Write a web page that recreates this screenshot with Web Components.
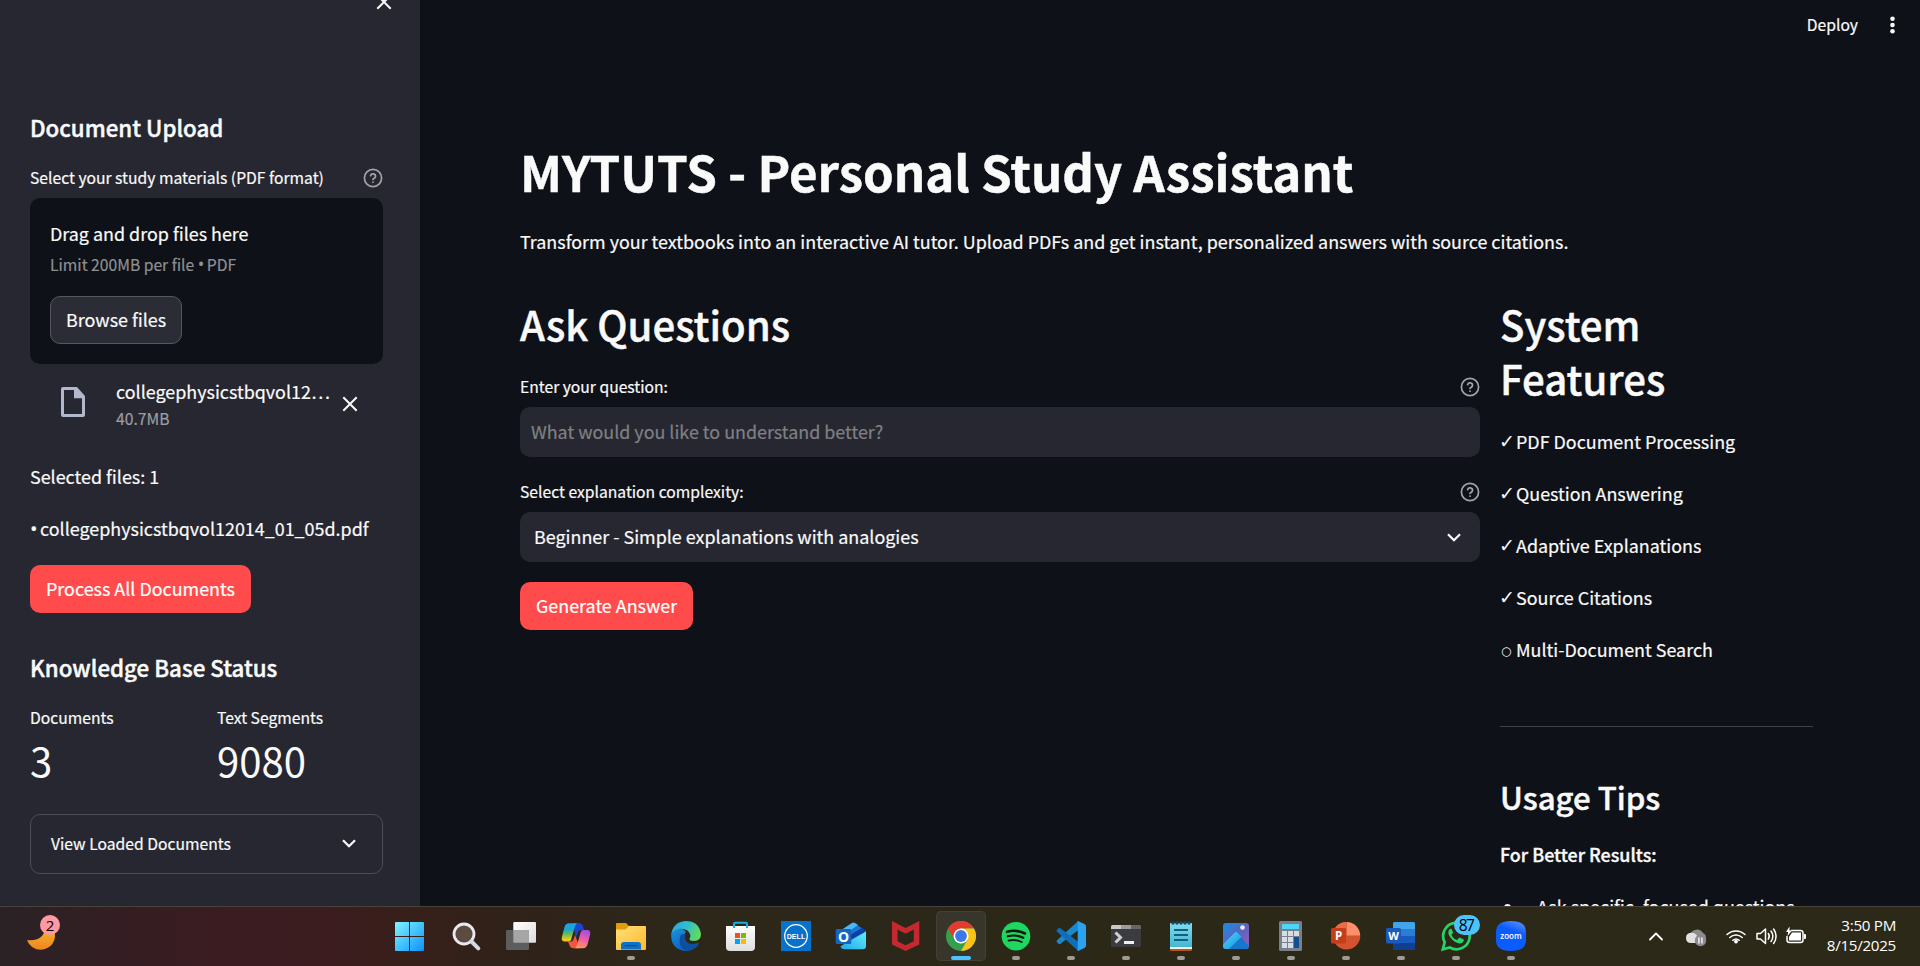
<!DOCTYPE html>
<html lang="en">
<head>
<meta charset="utf-8">
<title>MYTUTS - Personal Study Assistant</title>
<style>
html,body{margin:0;height:100%;overflow:hidden;background:#0e1117}
body{font-family:"Noto Sans CJK SC",sans-serif;color:#fafafa;-webkit-text-stroke:.2px}
</style>
</head>
<body>
<app-window></app-window>
<script>
const define=(name,html)=>customElements.define(name,class extends HTMLElement{
  constructor(){super();this.attachShadow({mode:'open'})}
  connectedCallback(){
    const t=document.createElement('template');
    t.innerHTML=typeof html==='function'?html(this):html;
    this.shadowRoot.replaceChildren(t.content.cloneNode(true));
  }
});

/* Headings and text */
define('app-heading',`<style>
:host{display:block;font-weight:500;-webkit-text-stroke:.45px}
:host([level="1"]){font-size:49.2px;line-height:66px;font-weight:700;white-space:nowrap}
:host([level="2"]){font-size:40.15px;line-height:54px}
:host([level="3"]){font-size:31.2px;line-height:42px}
:host([level="4"]){font-size:22.3px;line-height:30px}
</style><slot></slot>`);
define('app-text',`<style>:host{display:block;font-size:17.92px;line-height:32px;white-space:nowrap}:host([strong]){font-weight:500;-webkit-text-stroke:.35px}</style><slot></slot>`);
define('bullet-mark',`<style>:host{display:inline-block;width:10px;font-family:"Open Sans",sans-serif;font-size:1.12em;line-height:1;letter-spacing:-2px}</style>•`);
define('help-icon',`<style>:host{display:block;width:20px;height:20px}svg{display:block}</style>
<svg width="20" height="20" viewBox="0 0 20 20" fill="none" stroke="#a3a4a8" stroke-width="1.7" stroke-linecap="round" stroke-linejoin="round"><circle cx="10" cy="10" r="8.6"/><path d="M7.6 7.7a2.5 2.5 0 0 1 4.9.8c0 1.7-2.5 2.1-2.5 3"/><path d="M10 14.1v.1"/></svg>`);
define('field-label',`<style>:host{display:flex;justify-content:space-between;align-items:center;height:28px;font-size:15.68px;line-height:28px;white-space:nowrap}</style><span><slot></slot></span><help-icon></help-icon>`);
define('app-button',`<style>
:host{display:flex;align-items:center;width:max-content;box-sizing:border-box;height:48px;padding:0 16px 2px;border-radius:10px;background:#ff4b4b;color:#fff;font-size:17.92px;line-height:32px;white-space:nowrap}
:host([secondary]){background:#2b2c36;border:1px solid #55565e;padding:0 15px 2px;color:#fafafa}
</style><slot></slot>`);
define('close-icon',`<style>:host{display:block;width:16px;height:16px}svg{display:block}</style><svg width="16" height="16" viewBox="0 0 16 16" stroke="#fafafa" stroke-width="2" stroke-linecap="butt"><path d="M1.3 1.3 14.7 14.7M14.7 1.3 1.3 14.7"/></svg>`);
define('chevron-icon',`<style>:host{display:block;width:14px;height:9px}svg{display:block}</style><svg width="14" height="9" viewBox="0 0 14 9" fill="none" stroke="#fafafa" stroke-width="2.3"><path d="M1 1.3 7 7.2 13 1.3"/></svg>`);

/* Sidebar */
define('file-dropzone',`<style>
:host{display:block;box-sizing:border-box;height:166px;padding:19px 20px 20px;border-radius:10px;background:#0e1117}
.t{font-size:17.92px;line-height:32px;white-space:nowrap}
.l{font-size:15.68px;line-height:28px;color:#8f9094;white-space:nowrap;margin:2px 0 17px}
</style><div class="t">Drag and drop files here</div><div class="l">Limit 200MB per file <bullet-mark style="width:9px"></bullet-mark>PDF</div><app-button secondary>Browse files</app-button>`);
define('file-item',e=>`<style>
:host{display:grid;grid-template-columns:24px 218px 16px;padding:12px 0 0 31px;height:64px;box-sizing:border-box}
svg{display:block;margin-top:11px}
.n{margin-left:31px;margin-right:-27px;width:217px;padding-top:1px}
.a{font-size:17.92px;line-height:28px;white-space:nowrap}
.b{font-size:15.68px;line-height:26px;color:#9c9da1;margin-top:1px}
close-icon{margin:20px 0 0 39px}
</style><svg width="24" height="30" viewBox="0 0 24 30"><path fill="#b1b8cb" fill-rule="evenodd" d="M2 0h14l8 9v19a2 2 0 0 1-2 2H2a2 2 0 0 1-2-2V2a2 2 0 0 1 2-2zm1 3v24h18V11.3h-8V3z"/></svg>
<div class="n"><div class="a"><slot></slot></div><div class="b">${e.getAttribute('size')}</div></div><close-icon></close-icon>`);
define('metric-card',e=>`<style>
:host{display:block}.l{font-size:15.68px;line-height:28px;white-space:nowrap}.v{font-size:40.1px;line-height:56px;-webkit-text-stroke:0}
</style><div class="l">${e.getAttribute('label')}</div><div class="v"><slot></slot></div>`);
define('app-expander',`<style>
:host{display:flex;align-items:center;justify-content:space-between;box-sizing:border-box;height:60px;padding:0 26px 0 20px;border:1px solid #4b4c55;border-radius:10px;font-size:15.68px;line-height:28px}
chevron-icon{margin-bottom:2px}
</style><span><slot></slot></span><chevron-icon></chevron-icon>`);
define('side-bar',`<style>
:host{display:block;box-sizing:border-box;width:420px;height:906px;padding:0 37px 0 30px;background:#262730;overflow:hidden}
.top{display:flex;justify-content:flex-end;height:113px;margin-top:-6px}
.top close-icon{margin-right:-8.500px}
.m{display:grid;grid-template-columns:187px 1fr;margin:22px 0 26px}
</style>
<div class="top"><close-icon></close-icon></div>
<app-heading level="4" style="padding:5px 0 0">Document Upload</app-heading>
<field-label style="margin:22px 0 6px">Select your study materials (PDF format)</field-label>
<file-dropzone></file-dropzone>
<file-item size="40.7MB">collegephysicstbqvol12…</file-item>
<app-text style="margin-top:32px">Selected files: 1</app-text>
<app-text style="margin-top:20px"><bullet-mark></bullet-mark>collegephysicstbqvol12014_01_05d.pdf</app-text>
<app-button style="margin-top:21px">Process All Documents</app-button>
<app-heading level="4" style="margin-top:39px">Knowledge Base Status</app-heading>
<div class="m"><metric-card label="Documents">3</metric-card><metric-card label="Text Segments">9080</metric-card></div>
<app-expander>View Loaded Documents</app-expander>`);

/* Main area */
define('text-field',`<style>:host{display:flex;align-items:center;height:50px;box-sizing:border-box;padding:0 11px 2px;border-radius:10px;background:#262730;color:#7f8084;font-size:17.92px;line-height:32px}</style><slot></slot>`);
define('select-field',`<style>:host{display:flex;align-items:center;justify-content:space-between;height:50px;box-sizing:border-box;padding:0 19px 2px 14px;border-radius:10px;background:#262730;font-size:17.92px;line-height:32px}chevron-icon{margin-top:2px}</style><span><slot></slot></span><chevron-icon></chevron-icon>`);
define('feature-item',e=>`<style>:host{display:flex;height:32px;margin-bottom:20px;font-size:17.92px;line-height:32px;white-space:nowrap}
i{font:normal 19px/32px "DejaVu Sans",sans-serif;width:17px;margin-left:-1px;flex:none;-webkit-text-stroke:0}
i.o{font-size:12px;line-height:36px;width:15px;margin-left:1px}</style><i class="${e.getAttribute('mark')==='○'?'o':''}">${e.getAttribute('mark')}</i><slot></slot>`);
define('tip-item',`<style>:host{display:flex;height:32px;font-size:17.92px;line-height:32px;white-space:nowrap}
i{width:7px;height:7px;border-radius:50%;background:#fafafa;margin:14px 26px 0 4px;flex:none}</style><i></i><slot></slot>`);
define('top-bar',`<style>:host{display:flex;justify-content:flex-end;align-items:center;height:50px;padding-right:22px;font-size:15.68px;line-height:28px}
svg{display:block;margin-left:28px}</style><span>Deploy</span><svg width="12" height="20" viewBox="0 0 12 20" fill="#fafafa"><circle cx="6.5" cy="3.7" r="2.3"/><circle cx="6.5" cy="10" r="2.3"/><circle cx="6.5" cy="16.2" r="2.3"/></svg>`);
define('main-area',`<style>
:host{display:block;height:906px;overflow:hidden;background:#0e1117}
.c{padding:0 0 0 100px}
.g{display:grid;grid-template-columns:960px 313px;column-gap:20px;margin-top:40px}
hr{border:0;height:1px;background:#3d3f44;margin:61px 0 49px}
</style><top-bar></top-bar><div class="c">
<app-heading level="1" style="margin-top:88px">MYTUTS - Personal Study Assistant</app-heading>
<app-text style="margin-top:21px">Transform your textbooks into an interactive AI tutor. Upload PDFs and get instant, personalized answers with source citations.</app-text>
<div class="g"><section>
<app-heading level="2">Ask Questions</app-heading>
<field-label style="margin:22px 0 6px">Enter your question:</field-label>
<text-field>What would you like to understand better?</text-field>
<field-label style="margin:21px 0 6px">Select explanation complexity:</field-label>
<select-field>Beginner - Simple explanations with analogies</select-field>
<app-button style="margin-top:20px">Generate Answer</app-button>
</section><section>
<app-heading level="2" style="margin-bottom:20px">System Features</app-heading>
<feature-item mark="✓">PDF Document Processing</feature-item>
<feature-item mark="✓">Question Answering</feature-item>
<feature-item mark="✓">Adaptive Explanations</feature-item>
<feature-item mark="✓">Source Citations</feature-item>
<feature-item mark="○">Multi-Document Search</feature-item>
<hr>
<app-heading level="3">Usage Tips</app-heading>
<app-text strong style="margin:20px 0 20px">For Better Results:</app-text>
<tip-item>Ask specific, focused questions</tip-item>
</section></div></div>`);

/* Taskbar */
const ICONS={
start:`<defs><linearGradient id="a" x1="0" y1="0" x2="1" y2="1"><stop stop-color="#80f4ff"/><stop offset="1" stop-color="#0c92fb"/></linearGradient></defs><path fill="url(#a)" d="M0 1h13v14H-1V2q0-1 1-1zM14 1h13q1 0 1 1v13H14zM-1 16h14v14H0q-1 0-1-1zM14 16h14v13q0 1-1 1H14z"/>`,
search:`<circle cx="13" cy="13" r="10" fill="#5b4b40" stroke="#e9e9ee" stroke-width="2.8"/><path d="M20.5 20.5 27.3 27.3" stroke="#d5d9e2" stroke-width="4" stroke-linecap="round"/>`,
task:`<defs><linearGradient id="a" x1="0" y1="0" x2="1" y2="1"><stop stop-color="#fff"/><stop offset="1" stop-color="#dcdcdc"/></linearGradient></defs><rect x="7.3" y="1" width="22.7" height="20.7" rx="1" fill="url(#a)"/><rect x="0" y="9" width="23" height="20" rx="1" fill="#5d5d5d"/><path d="M7.3 9H22q1 0 1 1v11.700H8.300q-1 0-1-1z" fill="#a6a6a6"/>`,
copilot:`<defs><linearGradient id="a" x1="0" y1="0" x2="0" y2="1"><stop stop-color="#1f9fee"/><stop offset=".35" stop-color="#18a9c8"/><stop offset=".62" stop-color="#6cc04a"/><stop offset=".9" stop-color="#f6c915"/></linearGradient><linearGradient id="b" x1=".6" y1="0" x2=".3" y2="1"><stop stop-color="#a94be0"/><stop offset=".5" stop-color="#ee5fa5"/><stop offset="1" stop-color="#ff9a5a"/></linearGradient></defs>
<path fill="#1b45cf" d="M12 2.300h7q2 0 2.800 2.500l1.300 4.500h-3.500q-2 0-2.700 2l-2 6z"/><path fill="#f5563c" d="M7 20.500l2 5q.8 1.800 3 1.800h7L14 14l-1.800 5q-.5 1.500-2 1.500z"/>
<path fill="url(#a)" d="M8 2.300h9q-2 0-3 3L10.200 18.500q-.7 2-2.700 2H4q-4.300 0-3-5L3.500 6Q4.600 2.300 8 2.300z"/>
<path fill="url(#b)" d="M22 27.300H13q2 0 3-3l3.800-13.200q.7-2 2.700-2H26q4.300 0 3 5l-2.500 9.500q-1 3.700-4.500 3.700z"/>`,
folder:`<defs><linearGradient id="a" x1="0" y1="0" x2="1" y2="1"><stop stop-color="#ffe07a"/><stop offset="1" stop-color="#fdb92c"/></linearGradient></defs><path fill="#e09c0b" d="M1 2h9l3 3h8v8H0V3q0-1 1-1z"/><path fill="url(#a)" d="M0 8.500h9.500l3.500-3.500h16q1 0 1 1v22q0 1-1 1H1q-1 0-1-1z"/><path fill="#0d72c7" d="M8 21h14q3 0 3 3v4.500H5V24q0-3 3-3z"/><path stroke="#0a4a8c" stroke-width="1.200" d="M8.500 24.700h13"/>`,
edge:`<defs><linearGradient id="a" x1="0" y1=".2" x2="1" y2=".5"><stop stop-color="#2da6dd"/><stop offset=".5" stop-color="#30bdd0"/><stop offset="1" stop-color="#62dc55"/></linearGradient><linearGradient id="b" x1="0" y1="0" x2=".6" y2="1"><stop stop-color="#1b93dc"/><stop offset="1" stop-color="#0a5cc0"/></linearGradient></defs><path fill="url(#b)" d="M.2 14Q0 27 12 29.700q9 1.300 15.500-6-9 3.500-13-2.500Q11 15 15 11 11 6 5 8 1 9.500.2 14z"/><path fill="#0f4f9e" d="M9.500 14.500Q6 26.500 15.500 29.900q8-.1 12.500-7.500-.4-.7-1.500-.3-7.500 2.600-11-1.600-2-2.500-1-6.500-3-2-5 .5z"/><path fill="url(#a)" d="M.2 13.500Q2 1 14.500 0 28 0 30 13q0 7-7 7-5 0-4.500-2.500 1.200-1.200.8-3.500Q17.500 7.500 9 7.800 2.500 8.300.2 13.500z"/>`,
store:`<defs><linearGradient id="a" x1="0" y1="0" x2="0" y2="1"><stop stop-color="#fff"/><stop offset="1" stop-color="#dedede"/></linearGradient></defs><path fill="url(#a)" d="M0 5h29v21q0 4-4 4H4q-4 0-4-4z"/><path d="M8 7V3q0-1.200 1.200-1.200h10.600Q21 1.800 21 3v4" fill="none" stroke="#16b1dd" stroke-width="2"/><path fill="#f25022" d="M9 12h5v5H9z"/><path fill="#7fba00" d="M15 12h5v5h-5z"/><path fill="#00a4ef" d="M9 18h5v5H9z"/><path fill="#ffb900" d="M15 18h5v5h-5z"/>`,
dell:`<path fill="#0672cb" d="M0 0h30v30H0z"/><circle cx="15" cy="15" r="11.300" fill="none" stroke="#fff" stroke-width="1.200"/><text x="15" y="17.900" font-size="7.600" font-weight="700" fill="#fff" text-anchor="middle" textLength="18.500" lengthAdjust="spacingAndGlyphs" font-family="Liberation Sans,sans-serif">DELL</text>`,
outlook:`<defs><linearGradient id="a" x1="0" y1="1" x2="1" y2="0"><stop stop-color="#21a6e8"/><stop offset="1" stop-color="#5ff0fb"/></linearGradient></defs><path fill="#1877d3" d="M4 10 15.500 2.200q1.500-.8 3 0L30 10v10H4z"/><path fill="#4bb8f5" d="M7 8l9-6q1.500-.8 3 0l3 2L9 13z"/><path fill="#0c3f9f" d="M30 10.500 14 19v-5l12-7z"/><path fill="url(#a)" d="M30 10.500V25q0 3.300-3.300 3.300H8.500q-3.500 0-4-3z"/><rect x="-.3" y="8" width="15.600" height="15" rx="1.500" fill="#0f66c3"/><text x="7.500" y="20.500" font-size="14" font-weight="700" fill="#fff" text-anchor="middle" font-family="Open Sans,sans-serif">O</text>`,
mcafee:`<path fill="#c3292e" d="M1 0l13.600 7L28.300 0v23.500L14.600 30 1 23.500zM6.500 8.500v11.800l8.100 4 8.200-4V8.500l-8.200 4.300z" fill-rule="evenodd"/>`,
chrome:`<circle cx="15" cy="15" r="15" fill="#34a04c"/><path fill="#e33b2e" d="M2 7.500A15 15 0 0 1 28 7.500H15L8.500 18.700z"/><path fill="#fbc318" d="M28 7.500A15 15 0 0 1 15 30l6.500-11.300L15 7.500z"/><circle cx="15" cy="15" r="7.500" fill="#fff"/><circle cx="15" cy="15" r="5.900" fill="#3c78e8"/>`,
spotify:`<circle cx="15" cy="15.200" r="14.300" fill="#1ed760"/><g fill="none" stroke="#14160f" stroke-linecap="round"><path d="M6 10.800q9.500-2.600 18 1.700" stroke-width="2.600"/><path d="M6.800 15.300q8.200-2.200 15.500 1.500" stroke-width="2.200"/><path d="M7.500 19.600q7-1.700 13.200 1.400" stroke-width="1.800"/></g>`,
vscode:`<path fill="#1b87cf" d="M22 0.300 1 19.300q-1 1 0 2l1.500 1.400q1 .8 2 0L23 8.500z"/><path fill="#0e6fb8" d="M22 29.700 1 10.700q-1-1 0-2l1.500-1.400q1-.8 2 0L23 21.500z"/><path fill="#2aa2f0" d="M22 0l6.500 3Q30 3.800 30 5.200v19.600q0 1.400-1.500 2.200L22 30q-1.200.2-.3-2V2q-.9-2.200.3-2z"/>`,
terminal:`<rect y="4" width="30" height="22" rx="1.500" fill="#3b3c3f"/><path fill="#c9c9c9" d="M1.500 4H10v4H0V5.500Q0 4 1.500 4z"/><path fill="#9c9c9c" d="M10 4h10v4H10z"/><path fill="#666" d="M20 4h8.500Q30 4 30 5.500V8H20z"/><path d="M4.500 11.500l5 5-5 5" fill="none" stroke="#d0d0d0" stroke-width="3"/><path fill="#eee" d="M13 20h10v3H13z"/>`,
notepad:`<defs><linearGradient id="a" x1="0" y1="0" x2="0" y2="1"><stop stop-color="#82dcee"/><stop offset="1" stop-color="#45b6d3"/></linearGradient></defs><path fill="#b55518" d="M4 20h22v8.500q0 1.500-1.500 1.500h-19Q4 30 4 28.500z"/><path fill="#f4f0ea" d="M4 20h22v8H4z"/><path fill="url(#a)" d="M4 2h22v24H4z"/><g fill="#0e4e68"><circle cx="7" cy="2" r="1.700"/><circle cx="11" cy="2" r="1.700"/><circle cx="15" cy="2" r="1.700"/><circle cx="19" cy="2" r="1.700"/><circle cx="23" cy="2" r="1.700"/></g><path stroke="#126080" stroke-width="2" d="M8 9h14M8 14h14M8 19h14"/>`,
photos:`<defs><linearGradient id="a" x1="0" y1="0" x2="1" y2="1"><stop stop-color="#1590e2"/><stop offset=".5" stop-color="#5a63c2"/><stop offset="1" stop-color="#a35bb0"/></linearGradient><linearGradient id="b" x1="0" y1="0" x2="1" y2="1"><stop stop-color="#4fd9fb"/><stop offset="1" stop-color="#168fe0"/></linearGradient></defs><rect x="2" y="2" width="26" height="26" rx="3" fill="url(#a)"/><path fill="#1577cd" d="M8 28 19 15.500 28 25q0 3-3 3z"/><path fill="url(#b)" d="M2 23.500 13.500 11.700q1.500-1.300 3 0l4 4L8 28H5q-3 0-3-3z"/><circle cx="21.500" cy="6.500" r="2.300" fill="#f2eefb"/>`,
calc:`<rect x="3" y="0" width="23" height="30" rx="1.500" fill="#79808a"/><path fill="#4dd6f7" d="M6 3h17v5H6z"/><path fill="#d7dde4" d="M6 10h5v5H6zM12 10h5v5h-5zM18 10h5v5h-5zM6 16h5v5H6zM12 16h5v5h-5zM6 22h5v5H6zM12 22h5v5h-5z"/><path fill="#104f94" d="M18 16h5v11h-5z"/>`,
ppt:`<path fill="#d35230" d="M15.500 1A13.800 13.800 0 1 0 29.300 14.800H15.500z"/><path fill="#ff8f6b" d="M15.500 1a13.800 13.800 0 0 1 13.700 13.800H15.500z"/><path fill="#ed6c47" d="M15.500 1A13.800 13.800 0 0 0 1.700 14.800h13.800z"/><rect x="0" y="7" width="15" height="15.500" rx="1.500" fill="#c43e1c"/><text x="7.600" y="19" font-size="11.500" font-weight="700" fill="#fff" text-anchor="middle" font-family="Open Sans,sans-serif">P</text>`,
word:`<rect x="7" y="1" width="22" height="28" rx="1.500" fill="#185abd"/><path fill="#41a5ee" d="M8.500 1h19Q29 1 29 2.500V8H7V2.500Q7 1 8.500 1z"/><path fill="#2b7cd3" d="M7 8h22v7H7z"/><path fill="#103f91" d="M7 22h22v5.500q0 1.500-1.500 1.500h-19Q7 29 7 27.500z"/><rect x="0" y="7" width="15" height="15.500" rx="1.500" fill="#185abd"/><text x="7.500" y="18.800" font-size="11" font-weight="700" fill="#fff" text-anchor="middle" font-family="Open Sans,sans-serif">W</text>`,
whatsapp:`<path fill="none" stroke="#25d366" stroke-width="2.700" d="M1.800 28.300l1.900-7.100A13.300 13.300 0 1 1 8.800 26.500z"/><path fill="#25d366" d="M10.500 7.800c-.7-.2-1.600 0-2.100.7-1.700 2-1.300 4.600.5 7.300 2.700 4 6.200 6.500 9.700 6.600 2 0 4-1.300 4.100-3 .1-.8 0-1-.4-1.200l-3.200-1.500c-.5-.2-.9 0-1.200.4l-1.200 1.500c-.3.4-.7.400-1.100.2-2-.8-3.700-2.300-4.900-4.400-.2-.4-.1-.7.1-1l1-1.400c.2-.3.200-.7.100-1z"/>`,
zoom:`<defs><linearGradient id="a" x1=".2" y1="1" x2=".6" y2="0"><stop stop-color="#0b5cff"/><stop offset=".7" stop-color="#0b5cff"/><stop offset="1" stop-color="#4d84f5"/></linearGradient></defs><path fill="url(#a)" d="M15 0q15 0 15 11v8q0 11-15 11T0 19v-8Q0 0 15 0z"/><text x="15" y="17.600" font-size="9" font-weight="600" fill="#fff" text-anchor="middle" textLength="21.500" lengthAdjust="spacingAndGlyphs" font-family="Open Sans,sans-serif">zoom</text>`
};
define('task-icon',e=>`<style>
:host{display:flex;flex-direction:column;align-items:center;justify-content:flex-end;box-sizing:border-box;width:50px;height:50px;margin:0 2.500px;border-radius:5px;position:relative}
:host([active]){background:#38352a;box-shadow:inset 0 0 0 1px #434035}
svg{display:block;overflow:visible;margin-bottom:5px;-webkit-text-stroke:0}
i{width:8px;height:4px;border-radius:2px;background:transparent;margin-bottom:1px}
:host([open]) i{background:#9f9b93}
:host([active]) i{width:20px;background:#4cc2ff}
b{position:absolute;left:23px;top:4px;width:26px;height:20px;border-radius:10px;background:#4cc2ff;color:#000;font:15.500px/20px "Open Sans",sans-serif;letter-spacing:-1.5px;text-indent:-1px;text-align:center;-webkit-text-stroke:0}
</style><svg width="30" height="30" viewBox="0 0 30 30">${ICONS[e.getAttribute('name')]}</svg><i></i>${e.hasAttribute('badge')?`<b>${e.getAttribute('badge')}</b>`:''}`);
define('weather-widget',`<style>:host{display:block;position:relative;width:383px;height:60px}svg{position:absolute;left:26px;top:16px}
b{position:absolute;left:40px;top:9px;width:20px;height:20px;border-radius:50%;background:#ff99a4;color:#000;font:15px/20px "Open Sans",sans-serif;text-align:center;-webkit-text-stroke:0}</style>
<svg width="30" height="30" viewBox="0 0 30 30"><defs><linearGradient id="a" x1="0" y1="0" x2="0" y2="1"><stop stop-color="#f9c22e"/><stop offset="1" stop-color="#ee8422"/></linearGradient></defs><path fill="url(#a)" d="M1 18.200Q20 20 20.500 0 29 5 29 14 28 26 15 27.800 5 27.800 1 18.200z"/></svg><b>2</b>`);
define('system-tray',`<style>
:host{display:flex;align-items:flex-start;margin-left:auto;height:60px}
svg{display:block;overflow:visible}
.k{font:15.200px/20px "Open Sans",sans-serif;letter-spacing:-.3px;text-align:right;color:#fff;width:96px;padding:9px 24px 0 0;box-sizing:content-box;white-space:nowrap;-webkit-text-stroke:0}
.k div{height:20px}
</style>
<svg height="60" viewBox="1640 906 160 60" style="width:160px" fill="none" stroke="#fff" stroke-width="1.500" stroke-linecap="round" stroke-linejoin="round">
<path d="M1650 939.500l6-6 6 6" stroke-width="1.800"/>
<g stroke="none"><path fill="#8c8c8c" d="M1690 937a7 7 0 0 1 13-4q3 1 3 5l-3 5h-10z"/><path fill="#e1e1e1" d="M1686 938q0-5 5-5.200 4-.3 6 3l6 5q-1 2.200-3 2.200h-9q-5 0-5-5z"/><circle cx="1700.500" cy="940.500" r="5.700" fill="#8a8a90"/><path fill="#fff" d="M1698.300 937.500h1.300v6h-1.300zM1701.300 937.500h1.300v6h-1.300z"/></g>
<path d="M1727 934.500a13 13 0 0 1 18 0M1729.800 937.500a9 9 0 0 1 12.400 0M1732.800 940.300a5 5 0 0 1 6.400 0"/><circle cx="1736" cy="941.600" r="1.200" fill="#fff"/>
<path d="M1757 933.500h3.500l5-4.500v14.500l-5-4.500h-3.500zM1768.300 933.500q2 2.800 0 5.600M1771 931q3.800 5.200 0 10.500M1773.600 929q5 7.300 0 14.500"/>
<path d="M1791.500 930.500h9q2.500 0 2.500 2.500v7q0 2.500-2.500 2.500h-11q-2.500 0-2.500-2.500v-3.500"/><path stroke="none" fill="#fff" d="M1792 932.500h9v8h-12v-3.500zM1804 934h1q1 0 1 1v3q0 1-1 1h-1zM1789.500 926.500l-3.500 5.500h2.200l-.7 4 4.500-5.500h-2.500z"/>
</svg>
<div class="k"><div>3:50 PM</div><div>8/15/2025</div></div>`);
define('task-bar',`<style>
:host{display:flex;height:60px;box-sizing:border-box;background:linear-gradient(90deg,#2a2225 0,#341e23 120px,#3b1c21 230px,#3c1c1f 330px,#372019 420px,#302219 500px,#2d2719 660px,#2b2818 1000px,#2c2918 1920px);box-shadow:inset 0 1px #47433b}
.i{display:flex;padding-top:5px}
</style><weather-widget></weather-widget><div class="i">
<task-icon name="start"></task-icon><task-icon name="search"></task-icon><task-icon name="task"></task-icon><task-icon name="copilot"></task-icon><task-icon name="folder" open></task-icon><task-icon name="edge"></task-icon><task-icon name="store"></task-icon><task-icon name="dell"></task-icon><task-icon name="outlook"></task-icon><task-icon name="mcafee"></task-icon><task-icon name="chrome" open active></task-icon><task-icon name="spotify" open></task-icon><task-icon name="vscode" open></task-icon><task-icon name="terminal" open></task-icon><task-icon name="notepad" open></task-icon><task-icon name="photos" open></task-icon><task-icon name="calc" open></task-icon><task-icon name="ppt" open></task-icon><task-icon name="word" open></task-icon><task-icon name="whatsapp" open badge="87"></task-icon><task-icon name="zoom" open></task-icon>
</div><system-tray></system-tray>`);
define('app-window',`<style>:host{display:grid;width:1920px;height:966px;grid-template:906px 60px/420px 1500px}task-bar{grid-column:1/3}</style><side-bar></side-bar><main-area></main-area><task-bar></task-bar>`);
</script>
</body>
</html>
